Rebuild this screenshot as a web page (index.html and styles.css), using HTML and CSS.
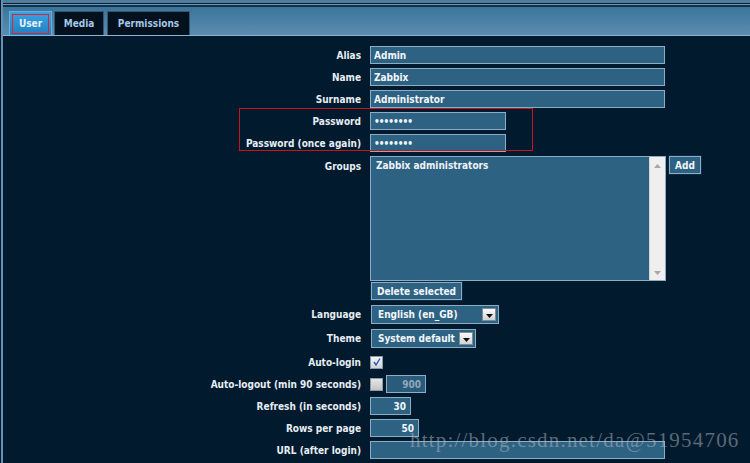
FILE: index.html
```html
<!DOCTYPE html>
<html>
<head>
<meta charset="utf-8">
<title>User</title>
<link rel="stylesheet" href="styles.css">
</head>
<body>
<div class="frame">
  <div class="topstrip"></div>
  <div class="tabbar">
    <div class="tab tab-user active">User</div>
    <div class="tab tab-media">Media</div>
    <div class="tab tab-perm">Permissions</div>
  </div>
  <form class="form">
    <div class="row"><label class="lbl">Alias</label><div class="field"><input class="inp wide" value="Admin"></div></div>
    <div class="row"><label class="lbl">Name</label><div class="field"><input class="inp wide" value="Zabbix"></div></div>
    <div class="row"><label class="lbl">Surname</label><div class="field"><input class="inp wide" value="Administrator"></div></div>
    <div class="row"><label class="lbl">Password</label><div class="field"><input class="inp pass" type="password" value="zabbix12"></div></div>
    <div class="row"><label class="lbl">Password (once again)</label><div class="field"><input class="inp pass" type="password" value="zabbix12"></div></div>
    <div class="row row-top"><label class="lbl lbl-top">Groups</label>
      <div class="field field-col">
        <div class="groups-line">
          <div class="listbox">
            <div class="list-items"><div class="list-item">Zabbix administrators</div></div>
            <div class="scrollbar">
              <svg width="7" height="4" viewBox="0 0 7 4"><path d="M0 4 L3.5 0 L7 4 Z" fill="#a8a8a8"/></svg>
              <svg width="7" height="4" viewBox="0 0 7 4"><path d="M0 0 L3.5 4 L7 0 Z" fill="#a8a8a8"/></svg>
            </div>
          </div>
          <button type="button" class="btn btn-add">Add</button>
        </div>
        <button type="button" class="btn btn-del">Delete selected</button>
      </div>
    </div>
    <div class="row row-sel"><label class="lbl">Language</label><div class="field">
      <div class="select sel-lang"><span class="sel-text">English (en_GB)</span><span class="sel-btn"><svg width="7" height="4" viewBox="0 0 7 4"><path d="M0 0 L3.5 4 L7 0 Z" fill="#111"/></svg></span></div>
    </div></div>
    <div class="row row-sel"><label class="lbl">Theme</label><div class="field">
      <div class="select sel-theme"><span class="sel-text">System default</span><span class="sel-btn"><svg width="7" height="4" viewBox="0 0 7 4"><path d="M0 0 L3.5 4 L7 0 Z" fill="#111"/></svg></span></div>
    </div></div>
    <div class="row row-check"><label class="lbl">Auto-login</label><div class="field">
      <span class="check"><svg width="10" height="10" viewBox="0 0 10 10"><path d="M2 5 L4 8 L8 1.5" fill="none" stroke="#2a56b8" stroke-width="1.4"/></svg></span>
    </div></div>
    <div class="row"><label class="lbl">Auto-logout (min 90 seconds)</label><div class="field field-gap">
      <span class="check unchecked"></span><input class="inp num num-dis" value="900" disabled>
    </div></div>
    <div class="row"><label class="lbl">Refresh (in seconds)</label><div class="field"><input class="inp num num-refresh" value="30"></div></div>
    <div class="row"><label class="lbl">Rows per page</label><div class="field"><input class="inp num num-rows" value="50"></div></div>
    <div class="row"><label class="lbl">URL (after login)</label><div class="field"><input class="inp wide" value=""></div></div>
  </form>
  <div class="annot annot-pass"></div>
  <div class="watermark">http://blog.csdn.net/da@51954706</div>
</div>
</body>
</html>
```

FILE: styles.css
```css
* { box-sizing: border-box; }
html, body { margin: 0; padding: 0; }
body {
  width: 750px;
  height: 463px;
  overflow: hidden;
  background: #021a2e;
  font-family: "DejaVu Sans Condensed", "DejaVu Sans", sans-serif;
  font-size: 10px;
  font-weight: bold;
  color: #e6edf3;
  padding-left: 1px;
}
.frame {
  position: relative;
  height: 463px;
  border-left: 2px solid #6592b3;
}
.topstrip {
  height: 7px;
  background: linear-gradient(to bottom, #4e7c9c 0, #4e7c9c 3px, #0b1f30 3px, #0b1f30 4px, #6a97b7 4px, #6a97b7 5px, #12304a 5px, #12304a 7px);
}
.tabbar {
  height: 29px;
  display: flex;
  align-items: flex-end;
  gap: 2px;
  padding-left: 6px;
  background: linear-gradient(to bottom, #3b749a, #5b8db1);
  border-bottom: 1px solid #86b6d6;
}
.tab {
  position: relative;
  height: 24px;
  display: flex;
  align-items: center;
  justify-content: center;
  font-size: 10px;
  color: #a6c8e8;
  background: #03101d;
  border: 1px solid #36566f;
  border-bottom: none;
}
.tab-user { width: 43px; }
.tab-media { width: 50px; margin-right: 1px; }
.tab-perm { width: 83px; }
.tab.active {
  color: #e4f0fa;
  background: linear-gradient(to bottom, #3aa2e4, #1f80c2);
  border-color: #62b0de;
}
.tab.active::after {
  content: "";
  position: absolute;
  left: 2px;
  top: 2px;
  right: 2px;
  bottom: 1px;
  border: 1px solid #e0242a;
}
.form {
  padding-top: 10px;
  display: flex;
  flex-direction: column;
  gap: 4px;
}
.row {
  display: flex;
  align-items: center;
  min-height: 18px;
}
.row-top { align-items: flex-start; }
.row-check { margin-top: 1px; }
.lbl {
  width: 358px;
  text-align: right;
  margin-right: 9px;
  padding-top: 1px;
  color: #e6edf3;
  white-space: nowrap;
}
.lbl-top { padding-top: 5px; }
.field { display: flex; align-items: center; }
.field-col { flex-direction: column; align-items: flex-start; gap: 2px; }
.field-gap { gap: 2px; }
.inp {
  height: 18px;
  border: 1px solid #8badc6;
  background: #2e6283;
  color: #f2f6fa;
  font-family: inherit;
  font-size: 10px;
  font-weight: bold;
  padding: 0 3px;
  margin: 0;
  outline: none;
}
.wide { width: 295px; }
.pass { width: 136px; letter-spacing: -1px; }
.num { text-align: right; padding-right: 4px; }
.num-dis { width: 40px; color: #90a8bc; background: #2b5b7b; margin-left: 1px; }
.num-refresh { width: 41px; }
.num-rows { width: 49px; }
.groups-line { display: flex; align-items: flex-start; gap: 3px; }
.listbox {
  width: 296px;
  height: 125px;
  border: 1px solid #8badc6;
  background: #2e6283;
  display: flex;
}
.list-items { flex: 1; padding: 3px 5px; }
.list-item { color: #eef3f8; }
.scrollbar {
  width: 16px;
  background: #efefef;
  border-left: 1px solid #d4d4d4;
  display: flex;
  flex-direction: column;
  justify-content: space-between;
  align-items: center;
  padding: 7px 0 5px;
}
.btn {
  height: 18px;
  border: 1px solid #8badc6;
  background: #2e6283;
  color: #f2f6fa;
  font-family: inherit;
  font-size: 10px;
  font-weight: bold;
  padding: 0 5px;
  margin: 0;
  box-shadow: 0 0 0 1px #0e2a40;
}
.btn-add { width: 32px; padding: 0; }
.btn-del { width: 91px; margin-left: 1px; margin-top: -1px; padding: 0; }
.row-sel { min-height: 20px; }
.select {
  height: 19px;
  margin-left: 1px;
  border: 1px solid #8badc6;
  background: #2e6283;
  display: flex;
  align-items: center;
  justify-content: space-between;
  padding: 0 2px 0 6px;
  color: #f2f6fa;
}
.sel-lang { width: 128px; }
.sel-theme { width: 105px; }
.sel-btn {
  width: 14px;
  height: 13px;
  background: linear-gradient(to bottom, #fafafa, #d2d2d2);
  border: 1px solid #7c8c98;
  display: flex;
  align-items: center;
  justify-content: center;
  padding-top: 3px;
}
.check {
  width: 13px;
  height: 13px;
  border: 1px solid #8a9aa8;
  background: linear-gradient(to bottom, #f4f4f4, #cfd4d8);
  display: flex;
  align-items: center;
  justify-content: center;
}
.check.unchecked { background: linear-gradient(to bottom, #e6e6e6, #c4c4c4); }
.annot {
  position: absolute;
  border: 1px solid #c8141c;
  pointer-events: none;
}
.annot-pass { left: 236px; top: 108px; width: 294px; height: 43px; }
.watermark {
  position: absolute;
  left: 407px;
  top: 428px;
  font-family: "Liberation Serif", "DejaVu Serif", serif;
  font-weight: normal;
  font-size: 21px;
  letter-spacing: 1.2px;
  color: rgba(180, 186, 192, 0.5);
  white-space: nowrap;
}
```
